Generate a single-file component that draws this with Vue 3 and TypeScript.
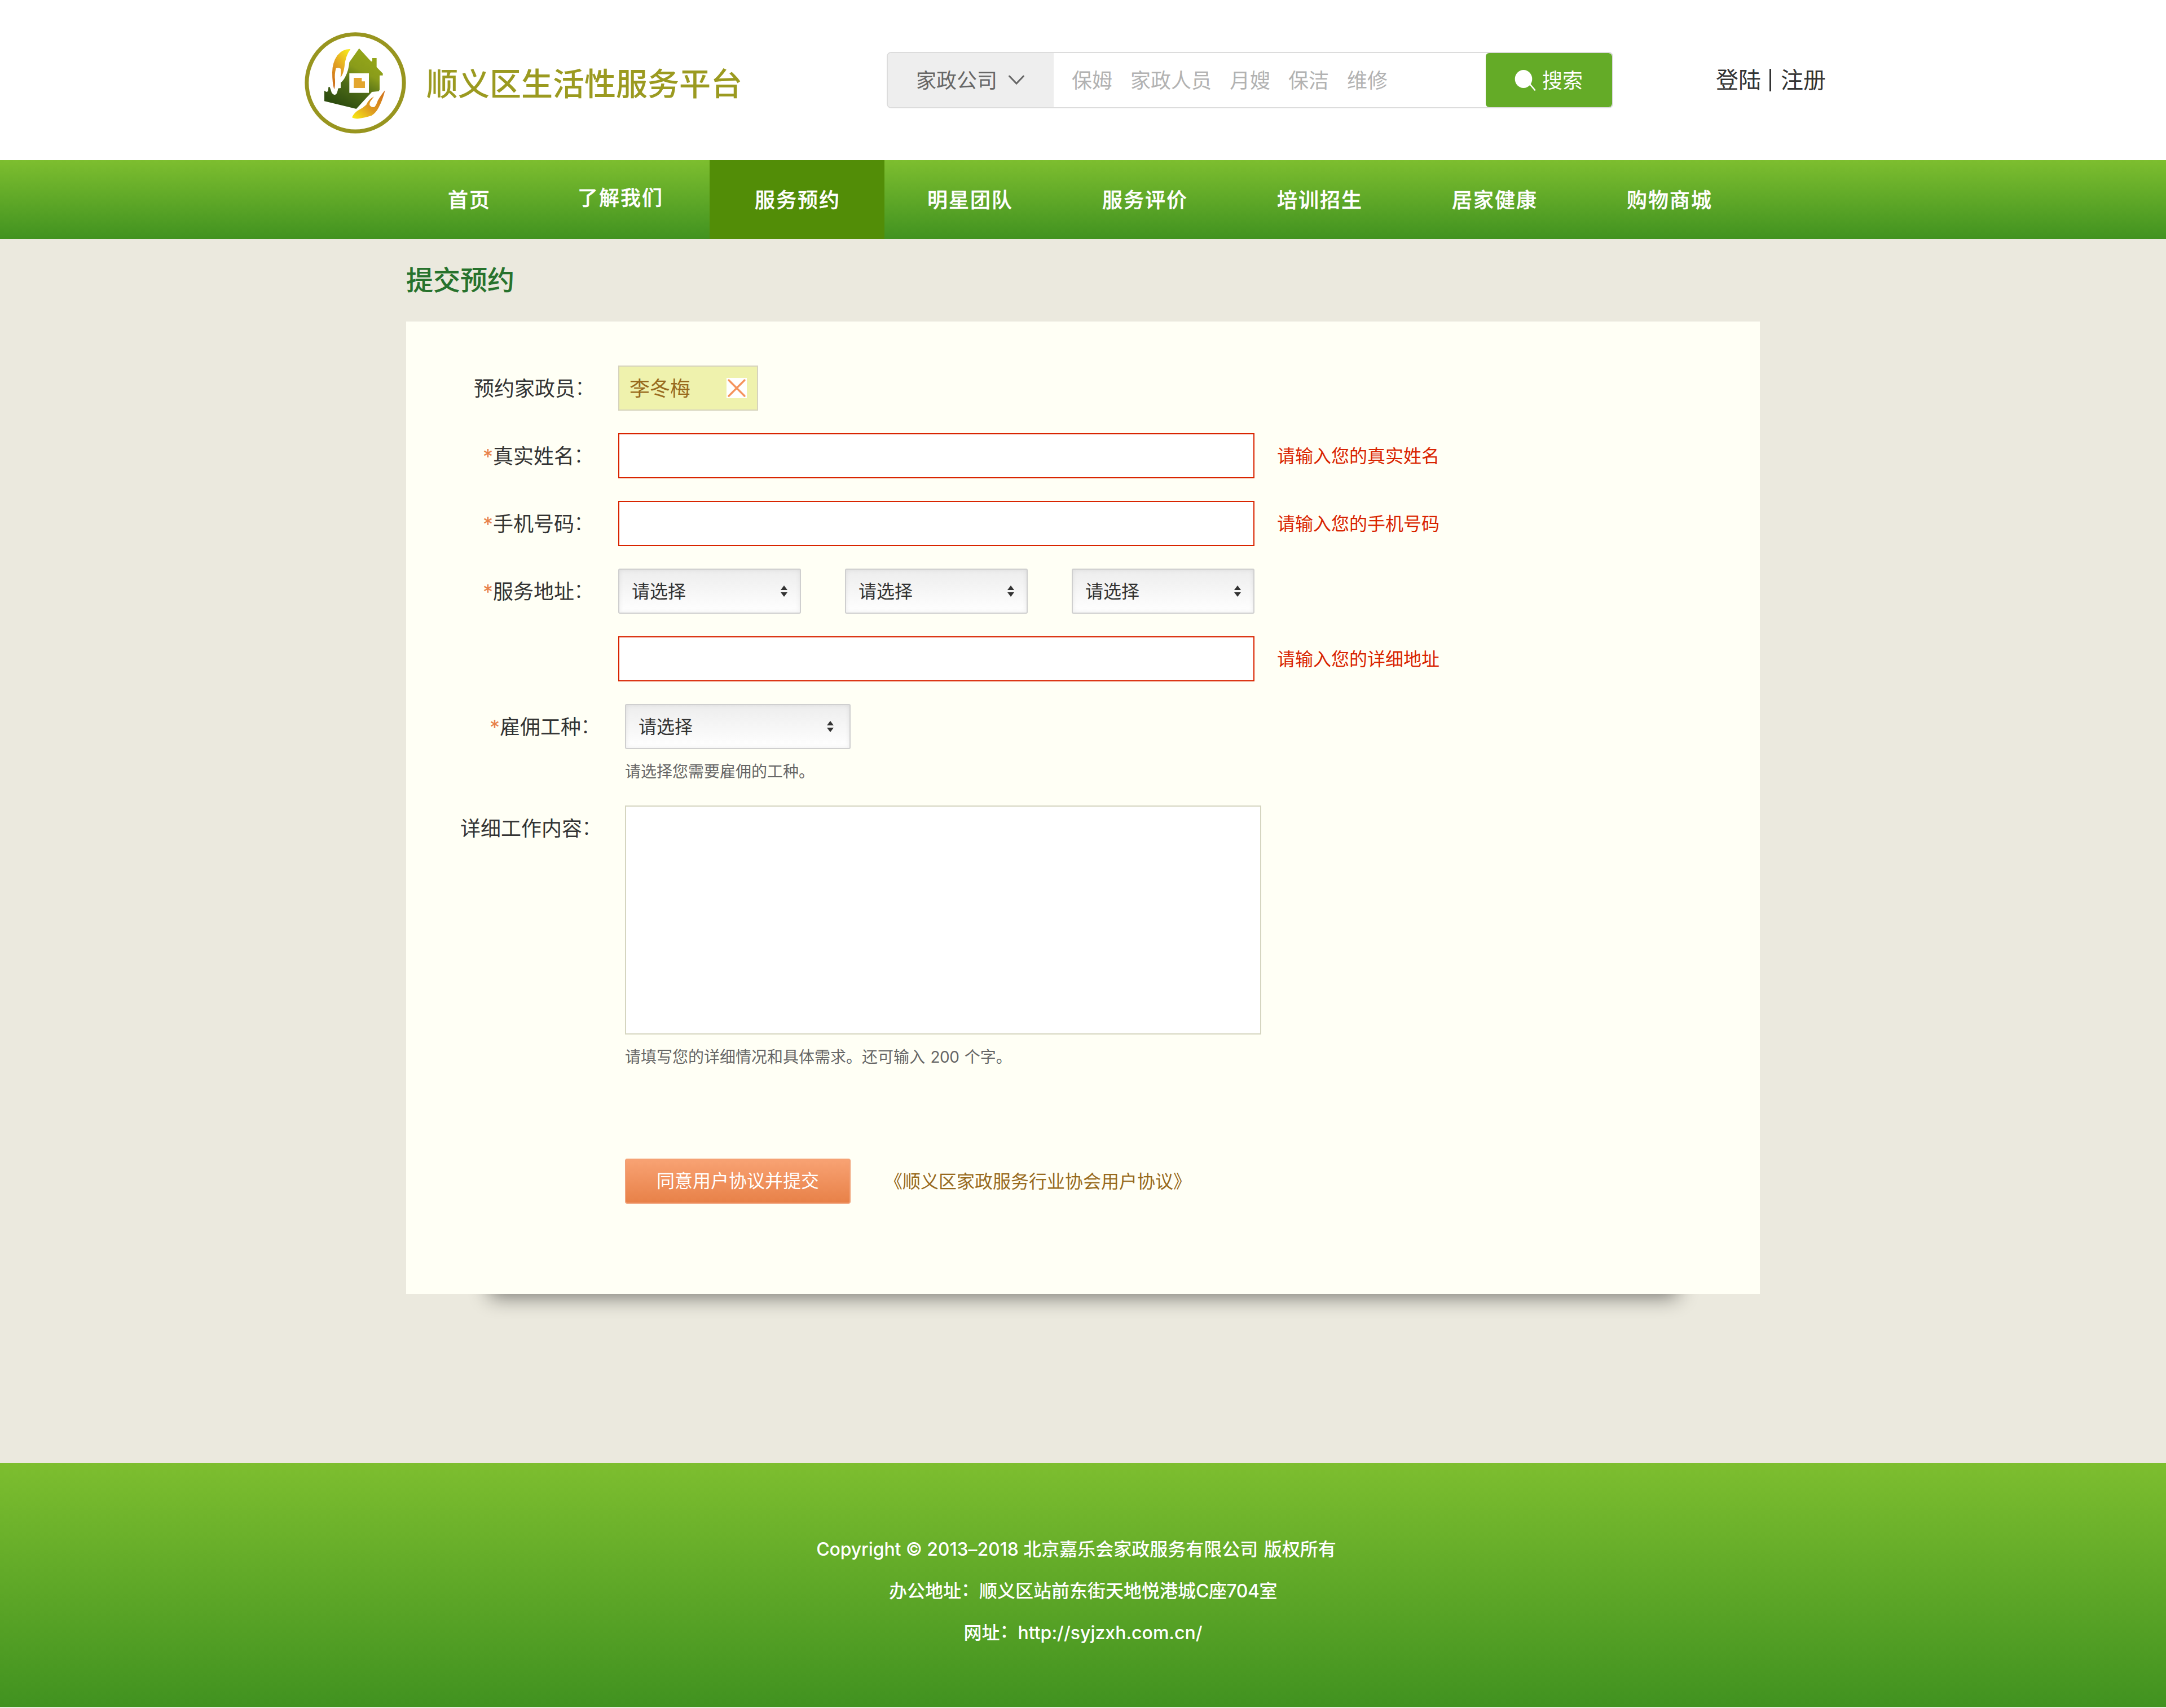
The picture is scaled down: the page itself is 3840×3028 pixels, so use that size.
<script setup lang="ts">
interface NavItem {
  label: string
  kind?: 'active' | 'raised' | 'first'
}

const nav: NavItem[] = [
  { label: '首页', kind: 'first' },
  { label: '了解我们', kind: 'raised' },
  { label: '服务预约', kind: 'active' },
  { label: '明星团队' },
  { label: '服务评价' },
  { label: '培训招生' },
  { label: '居家健康' },
  { label: '购物商城' },
]
const keywords: string[] = ['保姆', '家政人员', '月嫂', '保洁', '维修']
const regions: string[] = ['省', '市', '区']
</script>

<template>
  <div class="page">
    <header class="header">
      <svg class="logo" viewBox="0 0 600 600">
        <defs>
          <linearGradient id="house" x1="0.75" y1="0.1" x2="0.3" y2="0.95">
            <stop offset="0" stop-color="#93a519" />
            <stop offset="0.3" stop-color="#8a9c1a" />
            <stop offset="0.62" stop-color="#4e6b17" />
            <stop offset="1" stop-color="#2e4d0f" />
          </linearGradient>
          <linearGradient id="handA" x1="0.8" y1="0" x2="0.2" y2="1">
            <stop offset="0" stop-color="#f7e71a" />
            <stop offset="0.5" stop-color="#e2a324" />
            <stop offset="1" stop-color="#cc6a17" />
          </linearGradient>
          <linearGradient id="handB" x1="0" y1="1" x2="1" y2="0">
            <stop offset="0" stop-color="#fbee12" />
            <stop offset="0.45" stop-color="#dd9a22" />
            <stop offset="1" stop-color="#cf6d18" />
          </linearGradient>
        </defs>
        <circle cx="300" cy="305.500" r="258.500" fill="none" stroke="#98951f" stroke-width="21" />
        <path fill="url(#house)" d="M320 122 L384 192 L390 190 V174 H413 V222 L446 256 V266 H429 V343 L424 350 L388 354 Q376 368 360 384 L305 444 L135 403 V347 L146 354 L155 350 L157 328 L164 328 Q170 345 174 358 Q182 370 192 369 Q204 366 208 335 L222 333 V305 Q240 290 248 270 Q264 240 268 196 Z" />
        <path fill="url(#handA)" d="M274 126 Q232 124 204 160 Q178 196 177 250 Q177 305 187 340 Q193 325 192 290 Q188 262 197 228 Q210 222 222 230 Q225 250 221 277 Q236 262 242 220 Q246 165 274 126 Z" />
        <path fill="url(#handB)" d="M282 489 Q294 498 318 496 Q350 492 386 480 Q410 465 425 435 Q446 395 458 345 Q440 365 420 398 Q408 432 400 434 Q384 438 376 424 Q374 410 384 398 L399 379 Q372 392 358 422 Q342 438 318 450 Q295 462 282 489 Z" />
        <rect x="268" y="255" width="104" height="104" fill="#fff" />
        <path fill="#e3a62f" d="M292 279 H334 V298 H351 V333 H291 Z" />
      </svg>
      <h1 class="brand">顺义区生活性服务平台</h1>
      <div class="search">
        <div class="scope">
          <span>家政公司</span>
          <svg class="chevron" viewBox="0 0 28 18"><path d="M1.500 2 L14 15 L26.500 2" fill="none" stroke="#666" stroke-width="3" stroke-linecap="round" /></svg>
        </div>
        <div class="keywords">
          <span v-for="k in keywords" :key="k">{{ k }}</span>
        </div>
        <button class="go">
          <svg class="glass" viewBox="0 0 38 38">
            <ellipse cx="16" cy="17" rx="15.300" ry="16" fill="#fff" />
            <path d="M27 26 L36 36.500" stroke="#fff" stroke-width="2.600" stroke-linecap="round" />
          </svg>
          <span>搜索</span>
        </button>
      </div>
      <div class="account"><a>登陆</a><i></i><a>注册</a></div>
    </header>

    <nav class="nav">
      <a v-for="n in nav" :key="n.label" class="nav-item" :class="n.kind">{{ n.label }}</a>
    </nav>

    <main class="main">
      <h2 class="title">提交预约</h2>
      <section class="panel-wrap">
        <div class="panel">
          <div class="row">
            <label class="label">预约家政员<b class="colon">：</b></label>
            <div class="tag">
              <span>李冬梅</span>
              <svg class="close" viewBox="0 0 36 36"><path d="M4 4 L32 32 M32 4 L4 32" stroke="#f5935c" stroke-width="3.400" stroke-linecap="round" /></svg>
            </div>
          </div>
          <div class="row">
            <label class="label req"><em>*</em>真实姓名<b class="colon">：</b></label>
            <div class="input"></div>
            <span class="error">请输入您的真实姓名</span>
          </div>
          <div class="row">
            <label class="label req"><em>*</em>手机号码<b class="colon">：</b></label>
            <div class="input"></div>
            <span class="error">请输入您的手机号码</span>
          </div>
          <div class="row">
            <label class="label req"><em>*</em>服务地址<b class="colon">：</b></label>
            <div class="selects">
              <div v-for="r in regions" :key="r" class="select">
                <span>请选择</span>
                <svg class="arrows" viewBox="0 0 12 20"><path d="M0 8 L6 0 L12 8 Z M0 12 L6 20 L12 12 Z" fill="#333" /></svg>
              </div>
            </div>
          </div>
          <div class="row">
            <label class="label"></label>
            <div class="input"></div>
            <span class="error">请输入您的详细地址</span>
          </div>
          <div class="row second">
            <label class="label job"><em>*</em>雇佣工种<b class="colon">：</b></label>
            <div class="select wide">
              <span>请选择</span>
              <svg class="arrows" viewBox="0 0 12 20"><path d="M0 8 L6 0 L12 8 Z M0 12 L6 20 L12 12 Z" fill="#333" /></svg>
            </div>
          </div>
          <p class="hint hint-job">请选择您需要雇佣的工种。</p>
          <div class="row second area-row">
            <label class="label">详细工作内容<b class="colon">：</b></label>
            <div class="textarea"></div>
          </div>
          <p class="hint hint-area">请填写您的详细情况和具体需求。还可输入 <span class="num">200</span> 个字。</p>
          <div class="actions">
            <button class="submit">同意用户协议并提交</button>
            <a class="terms">《顺义区家政服务行业协会用户协议》</a>
          </div>
        </div>
      </section>
    </main>

    <footer class="footer">
      <p class="copyright"><span class="latin">Copyright © 2013–2018</span> 北京嘉乐会家政服务有限公司 <span class="rights">版权所有</span></p>
      <p>办公地址<b class="colon">：</b>顺义区站前东街天地悦港城<span class="room">C座704室</span></p>
      <p>网址<b class="colon">：</b><span class="url">http://syjzxh.com.cn/</span></p>
    </footer>
  </div>
</template>

<style>
body {
  background: #ebe9de;
}
</style>

<style scoped>
.page {
  width: 3840px;
  height: 3028px;
  overflow: hidden;
  background: #ebe9de;
  font-family: Inter, "Noto Sans CJK SC", sans-serif;
  font-size: 36px;
  color: #333;
}
.page * {
  box-sizing: border-box;
}
h1, h2, p {
  margin: 0;
}
button {
  border: 0;
  padding: 0;
  font-family: inherit;
}
span, a, label {
  white-space: nowrap;
}
.colon {
  font-weight: inherit;
  position: relative;
  top: -0.1em;
}

.header {
  height: 284px;
  background: #fff;
  display: flex;
  align-items: flex-start;
  padding-left: 530px;
}
.logo {
  width: 200px;
  height: 200px;
  margin-top: 45px;
}
.brand {
  margin: 109px 0 0 26px;
  width: 560px;
  font-size: 56px;
  line-height: 80px;
  font-weight: 500;
  color: #9b9a20;
  white-space: nowrap;
}
.search {
  margin: 92px 0 0 256px;
  width: 1288px;
  height: 100px;
  border: 2px solid #dcdcdc;
  border-radius: 8px;
  display: flex;
  overflow: hidden;
  line-height: 98px;
}
.scope {
  width: 294px;
  background: #eee;
  color: #666;
  display: flex;
  padding-left: 50px;
}
.chevron {
  width: 28px;
  height: 18px;
  margin: 39px 0 0 20px;
}
.keywords {
  flex: 1;
  display: flex;
  gap: 32px;
  padding-left: 32px;
  color: #b2b2b2;
}
.go {
  width: 224px;
  background: #64ab27;
  border-radius: 6px;
  color: #fff;
  font-size: 36px;
  line-height: 98px;
  display: flex;
}
.glass {
  width: 38px;
  height: 38px;
  margin: 29px 0 0 51px;
}
.go span {
  margin-left: 11px;
}
.account {
  margin: 102px 0 0 182px;
  display: flex;
  align-items: center;
  font-size: 40px;
  line-height: 80px;
}
.account i {
  width: 3px;
  height: 40px;
  background: #333;
  margin: 0 17px 0 15px;
}

.nav {
  height: 140px;
  padding-left: 714px;
  background: linear-gradient(#7dbe2f, #419220);
  display: flex;
}
.nav-item {
  width: 310px;
  padding-left: 76px;
  color: #fff;
  font-weight: 500;
  -webkit-text-stroke: 0.4px #fff;
  letter-spacing: 2px;
  line-height: 143px;
}
.nav-item.first {
  width: 234px;
  padding-left: 80px;
}
.nav-item.raised {
  padding-left: 76px;
  line-height: 135px;
}
.nav-item.active {
  padding-left: 80px;
  background: #528d07;
}

.main {
  height: 2170px;
  padding: 0 720px;
}
.title {
  height: 146px;
  font-size: 48px;
  font-weight: 500;
  -webkit-text-stroke: 0.2px #27722c;
  line-height: 146px;
  color: #27722c;
}
.panel-wrap {
  position: relative;
  isolation: isolate;
}
.panel-wrap::before {
  content: "";
  position: absolute;
  z-index: -1;
  left: 148px;
  right: 146px;
  bottom: -5px;
  height: 100px;
  background: #000;
  opacity: 0.5;
  filter: blur(18px);
}
.panel {
  height: 1724px;
  background: #fffff5;
  padding-top: 78px;
}
.row {
  display: flex;
  height: 80px;
  margin-bottom: 40px;
}
.label {
  width: 336px;
  margin-right: 40px;
  text-align: right;
  line-height: 83px;
}
.label .colon {
  top: -0.05em;
  left: -1px;
  font-weight: 300;
}
.label.req {
  padding-right: 2px;
}
.label em {
  display: inline-block;
  width: 18px;
  text-align: center;
  font-style: normal;
  color: #e8824a;
}
.tag {
  width: 248px;
  height: 80px;
  border: 2px solid #d6d3bd;
  background: #eff2ad;
  color: #986a1d;
  line-height: 79px;
  display: flex;
  justify-content: space-between;
  padding: 0 18px;
}
.close {
  width: 36px;
  height: 36px;
  margin-top: 20px;
  background: #fff;
}
.input {
  width: 1128px;
  height: 80px;
  border: 2px solid #d92400;
  background: #fff;
}
.error {
  margin-left: 40px;
  font-size: 32px;
  line-height: 82px;
  color: #d92400;
}
.selects {
  display: flex;
  gap: 78px;
}
.select {
  width: 324px;
  height: 80px;
  border: 2px solid #cfcfcf;
  border-radius: 3px;
  background: linear-gradient(#ededed, #fff);
  box-shadow: inset 0 0 8px rgba(0, 0, 0, 0.08);
  font-size: 32px;
  line-height: 78px;
  display: flex;
  justify-content: space-between;
  padding: 0 22px;
}
.select.wide {
  width: 400px;
  padding-right: 28px;
}
.arrows {
  width: 12px;
  height: 20px;
  margin-top: 28px;
}
.second .label {
  width: 348px;
}
.second .label.job {
  padding-right: 2px;
}
.row.second {
  margin-bottom: 0;
}
.hint {
  margin-left: 388px;
  font-size: 28px;
  color: #666;
  white-space: nowrap;
}
.hint-job {
  height: 100px;
  line-height: 80px;
}
.row.area-row {
  height: 406px;
}
.textarea {
  width: 1128px;
  height: 406px;
  border: 2px solid #d5d5c0;
  background: #fff;
}
.hint-area {
  height: 220px;
  line-height: 81px;
  word-spacing: 1.5px;
}
.num {
  letter-spacing: -0.5px;
}
.actions {
  display: flex;
  margin-left: 388px;
}
.submit {
  width: 400px;
  height: 80px;
  border-radius: 4px;
  border: 2px solid #f0a077;
  border-top-color: #f5a274;
  background: linear-gradient(#f8a273, #e88148);
  color: #fff;
  font-size: 32px;
  line-height: 76px;
}
.terms {
  margin-left: 60px;
  font-size: 32px;
  line-height: 81px;
  color: #986a1d;
}

.footer {
  height: 432px;
  background: linear-gradient(#7dbe2f, #419220);
  padding-top: 116px;
  text-align: center;
  color: #fff;
  font-size: 32px;
  font-weight: 500;
  line-height: 74px;
}
.copyright {
  padding-right: 24px;
}
.latin {
  letter-spacing: -0.12px;
}
.rights {
  margin-left: 2px;
}
.room {
  letter-spacing: -0.5px;
}
</style>
